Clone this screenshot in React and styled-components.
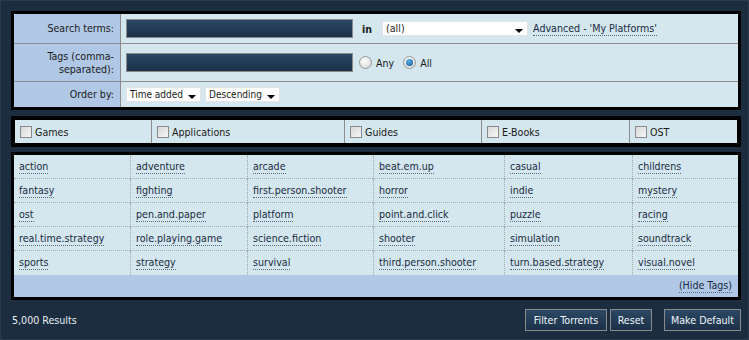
import React from 'react'
import styled, { createGlobalStyle } from 'styled-components'

const GlobalStyle = createGlobalStyle`
  html, body {
    margin: 0;
    padding: 0;
    background: #1c2d3f;
  }
  body {
    font-family: 'DejaVu Sans Condensed', Tahoma, 'Liberation Sans', sans-serif;
    font-size: 10.6px;
    color: #1a1a1a;
  }
`

const Page = styled.div`
  width: 749px;
  height: 340px;
  box-sizing: border-box;
  padding: 10px 7px 0 10px;
  border: 1px solid #2a3b4f;
  background: #1c2d3f;
`

const Panel = styled.div`
  border: ${p => p.$bw || 4}px solid #000;
  background: #d4e6ee;
  margin-bottom: ${p => p.$mb || 0}px;
`

const FormRow = styled.div`
  display: grid;
  grid-template-columns: 107px 1fr;
  height: ${p => p.$h}px;
  border-bottom: ${p => (p.$last ? 'none' : '1px solid #8c8c8c')};
`

const Label = styled.div`
  background: #b0c8e6;
  border-right: 1px solid #8c8c8c;
  display: flex;
  align-items: center;
  justify-content: flex-end;
  text-align: right;
  padding-right: 6px;
  line-height: 13px;
`

const Field = styled.div`
  display: flex;
  align-items: center;
  padding-left: 5px;
  gap: ${p => p.$gap || 0}px;
`

const TextInput = styled.div`
  width: 227px;
  height: 19px;
  box-sizing: border-box;
  border: 1px solid #8a8a8a;
  background: linear-gradient(#2c4864, #1b3048);
`

const In = styled.span`
  font-weight: bold;
  margin: 0 10px 0 9px;
`

const Select = styled.div`
  position: relative;
  width: ${p => p.$w}px;
  height: 15px;
  box-sizing: border-box;
  background: #fff;
  border: 1px solid #e4e4e4;
  padding-left: 3px;
  line-height: 13px;
  font-size: ${p => p.$fs || 10.6}px;
  color: #1a1a1a;
  white-space: nowrap;
  &::after {
    content: '';
    position: absolute;
    right: 4px;
    top: 7px;
    border-left: 4px solid transparent;
    border-right: 4px solid transparent;
    border-top: 4px solid #000;
  }
`

const Link = styled.a`
  color: #1a2b42;
  text-decoration: none;
  border-bottom: 1px dotted #5a6a7a;
  line-height: 13px;
  white-space: nowrap;
  margin-left: ${p => p.$ml || 0}px;
`

const Radio = styled.span`
  display: inline-block;
  width: 13px;
  height: 13px;
  box-sizing: border-box;
  border-radius: 50%;
  border: 1px solid #9a9a9a;
  background: radial-gradient(circle at 40% 35%, #ffffff, #d0d0d0);
  position: relative;
  margin-right: 4px;
  ${p =>
    p.$checked &&
    `
    &::after {
      content: '';
      position: absolute;
      left: 2px;
      top: 2px;
      width: 7px;
      height: 7px;
      border-radius: 50%;
      background: radial-gradient(circle at 40% 35%, #5ab4f0, #0d4f8a);
    }
  `}
`

const RadioOpt = styled.label`
  display: inline-flex;
  align-items: center;
  margin-right: 9px;
`

const Spacer = styled.span`
  width: ${p => p.$w}px;
`

const CatRow = styled.div`
  display: grid;
  grid-template-columns: 136px 193px 137px 148px 1fr;
  height: 23px;
`

const Cat = styled.label`
  display: flex;
  align-items: center;
  padding-left: 5px;
  border-left: ${p => (p.$first ? 'none' : '1px solid #8c8c8c')};
`

const Check = styled.span`
  display: inline-block;
  width: 12px;
  height: 12px;
  box-sizing: border-box;
  border: 1px solid #8a8a8a;
  background: linear-gradient(135deg, #d8d8d8, #f6f6f6);
  margin-right: 3px;
`

const TagGrid = styled.div`
  display: grid;
  grid-template-columns: 116px 117px 126px 131px 128px 1fr;
  grid-auto-rows: 24px;
`

const TagCell = styled.div`
  display: flex;
  align-items: center;
  padding-left: 5px;
  border-left: ${p => (p.$first ? 'none' : '1px dotted #a0a8ae')};
  border-bottom: ${p => (p.$last ? 'none' : '1px dotted #a0a8ae')};
`

const HideBar = styled.div`
  background: #b0c8e6;
  height: 22px;
  display: flex;
  align-items: center;
  justify-content: flex-end;
  padding-right: 6px;
`

const Footer = styled.div`
  display: flex;
  align-items: center;
  height: 40px;
  color: #e8eef4;
`

const Results = styled.span`
  flex: 1;
  padding-left: 1px;
`

const Button = styled.button`
  font: inherit;
  color: #f0f4f8;
  width: ${p => p.$w}px;
  height: 22px;
  padding: 0;
  margin-left: ${p => p.$ml || 0}px;
  border: 1px solid #8a8a8a;
  background: linear-gradient(#2c4864, #1c3148);
  cursor: pointer;
`

const tags = [
  ['action', 'adventure', 'arcade', 'beat.em.up', 'casual', 'childrens'],
  ['fantasy', 'fighting', 'first.person.shooter', 'horror', 'indie', 'mystery'],
  ['ost', 'pen.and.paper', 'platform', 'point.and.click', 'puzzle', 'racing'],
  ['real.time.strategy', 'role.playing.game', 'science.fiction', 'shooter', 'simulation', 'soundtrack'],
  ['sports', 'strategy', 'survival', 'third.person.shooter', 'turn.based.strategy', 'visual.novel'],
]

const categories = ['Games', 'Applications', 'Guides', 'E-Books', 'OST']

export default function App() {
  return (
    <>
      <GlobalStyle />
      <Page>
        <Panel $bw={3} $mb={6}>
          <FormRow $h={29}>
            <Label>Search terms:</Label>
            <Field>
              <TextInput />
              <In>in</In>
              <Select $w={146}>(all)</Select>
              <Link href="#" $ml={5}>Advanced - 'My Platforms'</Link>
            </Field>
          </FormRow>
          <FormRow $h={37}>
            <Label>Tags (comma-<br />separated):</Label>
            <Field>
              <TextInput />
              <Spacer $w={6} />
              <RadioOpt><Radio />Any</RadioOpt>
              <RadioOpt><Radio $checked />All</RadioOpt>
            </Field>
          </FormRow>
          <FormRow $h={25} $last>
            <Label>Order by:</Label>
            <Field $gap={4}>
              <Select $w={75} $fs={10}>Time added</Select>
              <Select $w={75} $fs={10}>Descending</Select>
            </Field>
          </FormRow>
        </Panel>

        <Panel $mb={5}>
          <CatRow>
            {categories.map((c, i) => (
              <Cat key={c} $first={i === 0}>
                <Check />
                {c}
              </Cat>
            ))}
          </CatRow>
        </Panel>

        <Panel $bw={3}>
          <TagGrid>
            {tags.map((row, r) =>
              row.map((t, c) => (
                <TagCell key={t} $first={c === 0} $last={r === tags.length - 1}>
                  <Link href="#">{t}</Link>
                </TagCell>
              ))
            )}
          </TagGrid>
          <HideBar>
            <Link href="#">(Hide Tags)</Link>
          </HideBar>
        </Panel>

        <Footer>
          <Results>5,000 Results</Results>
          <Button $w={82}>Filter Torrents</Button>
          <Button $w={42} $ml={3}>Reset</Button>
          <Button $w={77} $ml={12}>Make Default</Button>
        </Footer>
      </Page>
    </>
  )
}
